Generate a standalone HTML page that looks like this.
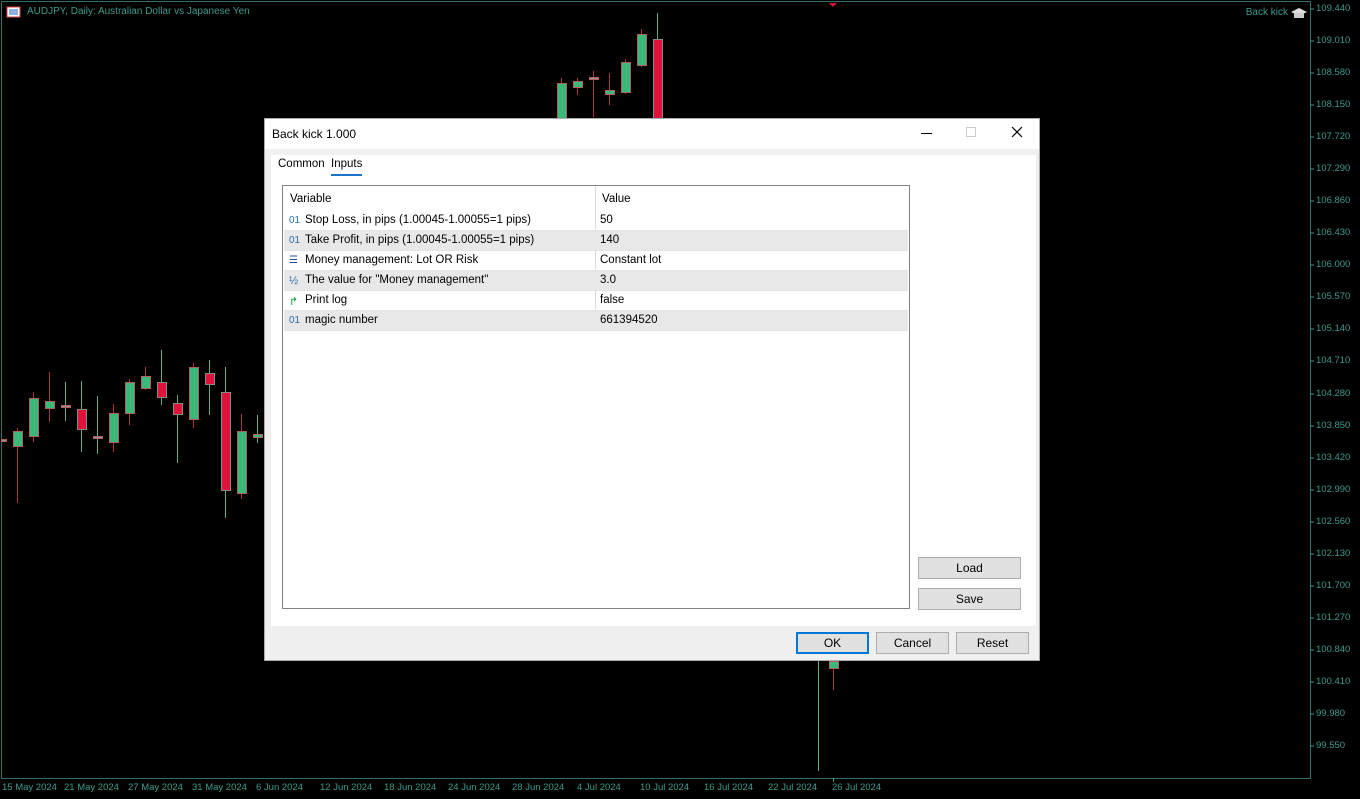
<!DOCTYPE html>
<html><head><meta charset="utf-8"><style>
*{margin:0;padding:0;box-sizing:border-box}
body{width:1360px;height:799px;background:#000;position:relative;overflow:hidden;font-family:"Liberation Sans",sans-serif}
.ax{position:absolute;color:#3f9a8c;font-size:9.5px;white-space:nowrap}
.dlg{position:absolute;left:264px;top:118px;width:776px;height:543px;background:#f0f0f0;border:1px solid #aaa;font-size:12px;color:#000}
.title{position:absolute;left:0;top:0;width:100%;height:30px;background:#fff}
.panel{position:absolute;left:6px;top:36px;width:765px;height:471px;background:#fff}
.tbl{position:absolute;left:11px;top:30px;width:628px;height:424px;border:1px solid #828282;background:#fff;font-size:11.5px}
.row{position:absolute;left:1px;width:624px;height:20px;border-bottom:1px solid #e3e3e3}
.row span{position:absolute;top:3px}
.g{background:#e8e8e8}
.btn{position:absolute;height:22px;background:#e1e1e1;border:1px solid #adadad;text-align:center;line-height:20px;font-size:12px}
.ic{position:absolute;left:5px;top:4px;font-size:10px;color:#1f6fb0;font-style:normal}
</style></head><body>
<svg width="1360" height="799" style="position:absolute;left:0;top:0">
<rect x="1.5" y="1.5" width="1309" height="777" fill="none" stroke="#2f6f6f" stroke-width="1"/>
<g stroke-width="1">
<g stroke="#b03040">
<line x1="17.5" y1="428" x2="17.5" y2="503"/><line x1="33.5" y1="392" x2="33.5" y2="442"/><line x1="49.5" y1="372" x2="49.5" y2="422"/><line x1="113.5" y1="404" x2="113.5" y2="452"/><line x1="129.5" y1="379" x2="129.5" y2="425"/><line x1="145.5" y1="367" x2="145.5" y2="390"/><line x1="193.5" y1="363" x2="193.5" y2="428"/><line x1="241.5" y1="414" x2="241.5" y2="499"/><line x1="561.5" y1="78" x2="561.5" y2="118"/><line x1="577.5" y1="78" x2="577.5" y2="95"/><line x1="593.5" y1="71" x2="593.5" y2="117"/><line x1="609.5" y1="73" x2="609.5" y2="105"/><line x1="625.5" y1="59" x2="625.5" y2="94"/><line x1="641.5" y1="29" x2="641.5" y2="67"/><line x1="833.5" y1="661" x2="833.5" y2="690"/>
</g>
<g stroke="#5fae80">
<line x1="65.5" y1="382" x2="65.5" y2="421"/><line x1="81.5" y1="381" x2="81.5" y2="452"/><line x1="97.5" y1="396" x2="97.5" y2="454"/><line x1="161.5" y1="350" x2="161.5" y2="405"/><line x1="177.5" y1="395" x2="177.5" y2="463"/><line x1="209.5" y1="360" x2="209.5" y2="415"/><line x1="225.5" y1="367" x2="225.5" y2="518"/><line x1="257.5" y1="415" x2="257.5" y2="443"/><line x1="657.5" y1="13" x2="657.5" y2="118"/><line x1="818.5" y1="661" x2="818.5" y2="771"/>
</g>
<g stroke="#b06060" fill="#3cb878">
<rect x="13.5" y="431.5" width="9" height="15"/><rect x="29.5" y="398.5" width="9" height="38"/><rect x="45.5" y="401.5" width="9" height="7"/><rect x="109.5" y="413.5" width="9" height="29"/><rect x="125.5" y="382.5" width="9" height="31"/><rect x="141.5" y="376.5" width="9" height="12"/><rect x="189.5" y="367.5" width="9" height="52"/><rect x="237.5" y="431.5" width="9" height="62"/><rect x="253.5" y="434.5" width="9" height="3"/><rect x="557.5" y="83.5" width="9" height="35"/><rect x="573.5" y="81.5" width="9" height="6"/><rect x="605.5" y="90.5" width="9" height="4"/><rect x="621.5" y="62.5" width="9" height="30"/><rect x="637.5" y="34.5" width="9" height="31"/><rect x="829.5" y="661.5" width="9" height="7"/>
</g>
<g stroke="#8a8a80" fill="#dc143c">
<rect x="77.5" y="409.5" width="9" height="20"/><rect x="157.5" y="382.5" width="9" height="15"/><rect x="173.5" y="403.5" width="9" height="11"/><rect x="205.5" y="373.5" width="9" height="11"/><rect x="221.5" y="392.5" width="9" height="98"/><rect x="653.5" y="39.5" width="9" height="80"/>
</g>
<g stroke="#b06060" fill="#a09090"><rect x="61.5" y="405.5" width="9" height="2"/><rect x="93.5" y="436.5" width="9" height="2"/><rect x="589.5" y="77.5" width="9" height="2"/><rect x="1.5" y="439.5" width="5" height="2"/></g>
</g>
<polygon points="829,3 837,3 833,7" fill="#dc143c"/>
<g stroke="#3f9a8c">
<line x1="1310" y1="9" x2="1314" y2="9"/><line x1="1310" y1="41" x2="1314" y2="41"/><line x1="1310" y1="73" x2="1314" y2="73"/><line x1="1310" y1="105" x2="1314" y2="105"/><line x1="1310" y1="137" x2="1314" y2="137"/><line x1="1310" y1="169" x2="1314" y2="169"/><line x1="1310" y1="201" x2="1314" y2="201"/><line x1="1310" y1="233" x2="1314" y2="233"/><line x1="1310" y1="265" x2="1314" y2="265"/><line x1="1310" y1="297" x2="1314" y2="297"/><line x1="1310" y1="329" x2="1314" y2="329"/><line x1="1310" y1="361" x2="1314" y2="361"/><line x1="1310" y1="394" x2="1314" y2="394"/><line x1="1310" y1="426" x2="1314" y2="426"/><line x1="1310" y1="458" x2="1314" y2="458"/><line x1="1310" y1="490" x2="1314" y2="490"/><line x1="1310" y1="522" x2="1314" y2="522"/><line x1="1310" y1="554" x2="1314" y2="554"/><line x1="1310" y1="586" x2="1314" y2="586"/><line x1="1310" y1="618" x2="1314" y2="618"/><line x1="1310" y1="650" x2="1314" y2="650"/><line x1="1310" y1="682" x2="1314" y2="682"/><line x1="1310" y1="714" x2="1314" y2="714"/><line x1="1310" y1="746" x2="1314" y2="746"/>
<line x1="833.5" y1="778" x2="833.5" y2="782"/>
</g>
<rect x="7" y="7" width="13" height="10" fill="#fff" stroke="#d04040"/><g stroke="#2060c0"><line x1="9" y1="10" x2="18" y2="10"/><line x1="9" y1="12" x2="18" y2="12"/><line x1="9" y1="14" x2="18" y2="14"/></g>
<polygon points="1291,12 1299,8 1307,12 1299,16" fill="#ddd"/><rect x="1294" y="13" width="10" height="5" fill="#ccc"/>
</svg>
<div class="ax" style="left:27px;top:6px;font-size:10px">AUDJPY, Daily:  Australian Dollar vs Japanese Yen</div>
<div class="ax" style="right:72px;top:7px;font-size:10px">Back kick</div>
<div class="ax" style="left:1316px;top:3px">109.440</div><div class="ax" style="left:1316px;top:35px">109.010</div><div class="ax" style="left:1316px;top:67px">108.580</div><div class="ax" style="left:1316px;top:99px">108.150</div><div class="ax" style="left:1316px;top:131px">107.720</div><div class="ax" style="left:1316px;top:163px">107.290</div><div class="ax" style="left:1316px;top:195px">106.860</div><div class="ax" style="left:1316px;top:227px">106.430</div><div class="ax" style="left:1316px;top:259px">106.000</div><div class="ax" style="left:1316px;top:291px">105.570</div><div class="ax" style="left:1316px;top:323px">105.140</div><div class="ax" style="left:1316px;top:355px">104.710</div><div class="ax" style="left:1316px;top:388px">104.280</div><div class="ax" style="left:1316px;top:420px">103.850</div><div class="ax" style="left:1316px;top:452px">103.420</div><div class="ax" style="left:1316px;top:484px">102.990</div><div class="ax" style="left:1316px;top:516px">102.560</div><div class="ax" style="left:1316px;top:548px">102.130</div><div class="ax" style="left:1316px;top:580px">101.700</div><div class="ax" style="left:1316px;top:612px">101.270</div><div class="ax" style="left:1316px;top:644px">100.840</div><div class="ax" style="left:1316px;top:676px">100.410</div><div class="ax" style="left:1316px;top:708px">99.980</div><div class="ax" style="left:1316px;top:740px">99.550</div>
<div class="ax" style="left:2px;top:782px">15 May 2024</div><div class="ax" style="left:64px;top:782px">21 May 2024</div><div class="ax" style="left:128px;top:782px">27 May 2024</div><div class="ax" style="left:192px;top:782px">31 May 2024</div><div class="ax" style="left:256px;top:782px">6 Jun 2024</div><div class="ax" style="left:320px;top:782px">12 Jun 2024</div><div class="ax" style="left:384px;top:782px">18 Jun 2024</div><div class="ax" style="left:448px;top:782px">24 Jun 2024</div><div class="ax" style="left:512px;top:782px">28 Jun 2024</div><div class="ax" style="left:577px;top:782px">4 Jul 2024</div><div class="ax" style="left:640px;top:782px">10 Jul 2024</div><div class="ax" style="left:704px;top:782px">16 Jul 2024</div><div class="ax" style="left:768px;top:782px">22 Jul 2024</div><div class="ax" style="left:832px;top:782px">26 Jul 2024</div>

<div class="dlg">
<div class="title"><span style="position:absolute;left:7px;top:8px">Back kick 1.000</span>
<div style="position:absolute;left:656px;top:14px;width:11px;height:1px;background:#000"></div>
<div style="position:absolute;left:701px;top:8px;width:10px;height:10px;border:1px solid #ccc"></div>
<svg style="position:absolute;left:746px;top:7px" width="12" height="12"><path d="M1 1L11 11M11 1L1 11" stroke="#000" stroke-width="1.2"/></svg>
</div>
<div class="panel">
<span style="position:absolute;left:7px;top:3px;font-size:11.5px">Common</span>
<span style="position:absolute;left:60px;top:3px;font-size:11.5px">Inputs</span>
<div style="position:absolute;left:60px;top:19px;width:31px;height:2px;background:#1a73c8"></div>
<div class="tbl">
<div style="position:absolute;left:312px;top:0;width:1px;height:145px;background:#d8d8d8"></div>
<div class="row" style="top:0;height:25px;border-bottom:none"><span style="left:6px;top:7px">Variable</span><span style="left:318px;top:7px">Value</span></div>
<div class="row" style="top:25px"><i class="ic">01</i><span style="left:21px">Stop Loss, in pips (1.00045-1.00055=1 pips)</span><span style="left:316px">50</span></div>
<div class="row g" style="top:45px"><i class="ic">01</i><span style="left:21px">Take Profit, in pips (1.00045-1.00055=1 pips)</span><span style="left:316px">140</span></div>
<div class="row" style="top:65px"><i class="ic" style="color:#2050a0">&#9776;</i><span style="left:21px">Money management: Lot OR Risk</span><span style="left:316px">Constant lot</span></div>
<div class="row g" style="top:85px"><i class="ic" style="font-size:11px">½</i><span style="left:21px">The value for "Money management"</span><span style="left:316px">3.0</span></div>
<div class="row" style="top:105px"><i class="ic" style="color:#1a9a3a;font-size:11px">&#8625;</i><span style="left:21px">Print log</span><span style="left:316px">false</span></div>
<div class="row g" style="top:125px"><i class="ic">01</i><span style="left:21px">magic number</span><span style="left:316px">661394520</span></div>
</div>
<div class="btn" style="left:647px;top:402px;width:103px">Load</div>
<div class="btn" style="left:647px;top:433px;width:103px">Save</div>
</div>
<div class="btn" style="left:531px;top:513px;width:73px;border:2px solid #0078d7;line-height:18px">OK</div>
<div class="btn" style="left:611px;top:513px;width:73px">Cancel</div>
<div class="btn" style="left:691px;top:513px;width:73px">Reset</div>
</div>
</body></html>
